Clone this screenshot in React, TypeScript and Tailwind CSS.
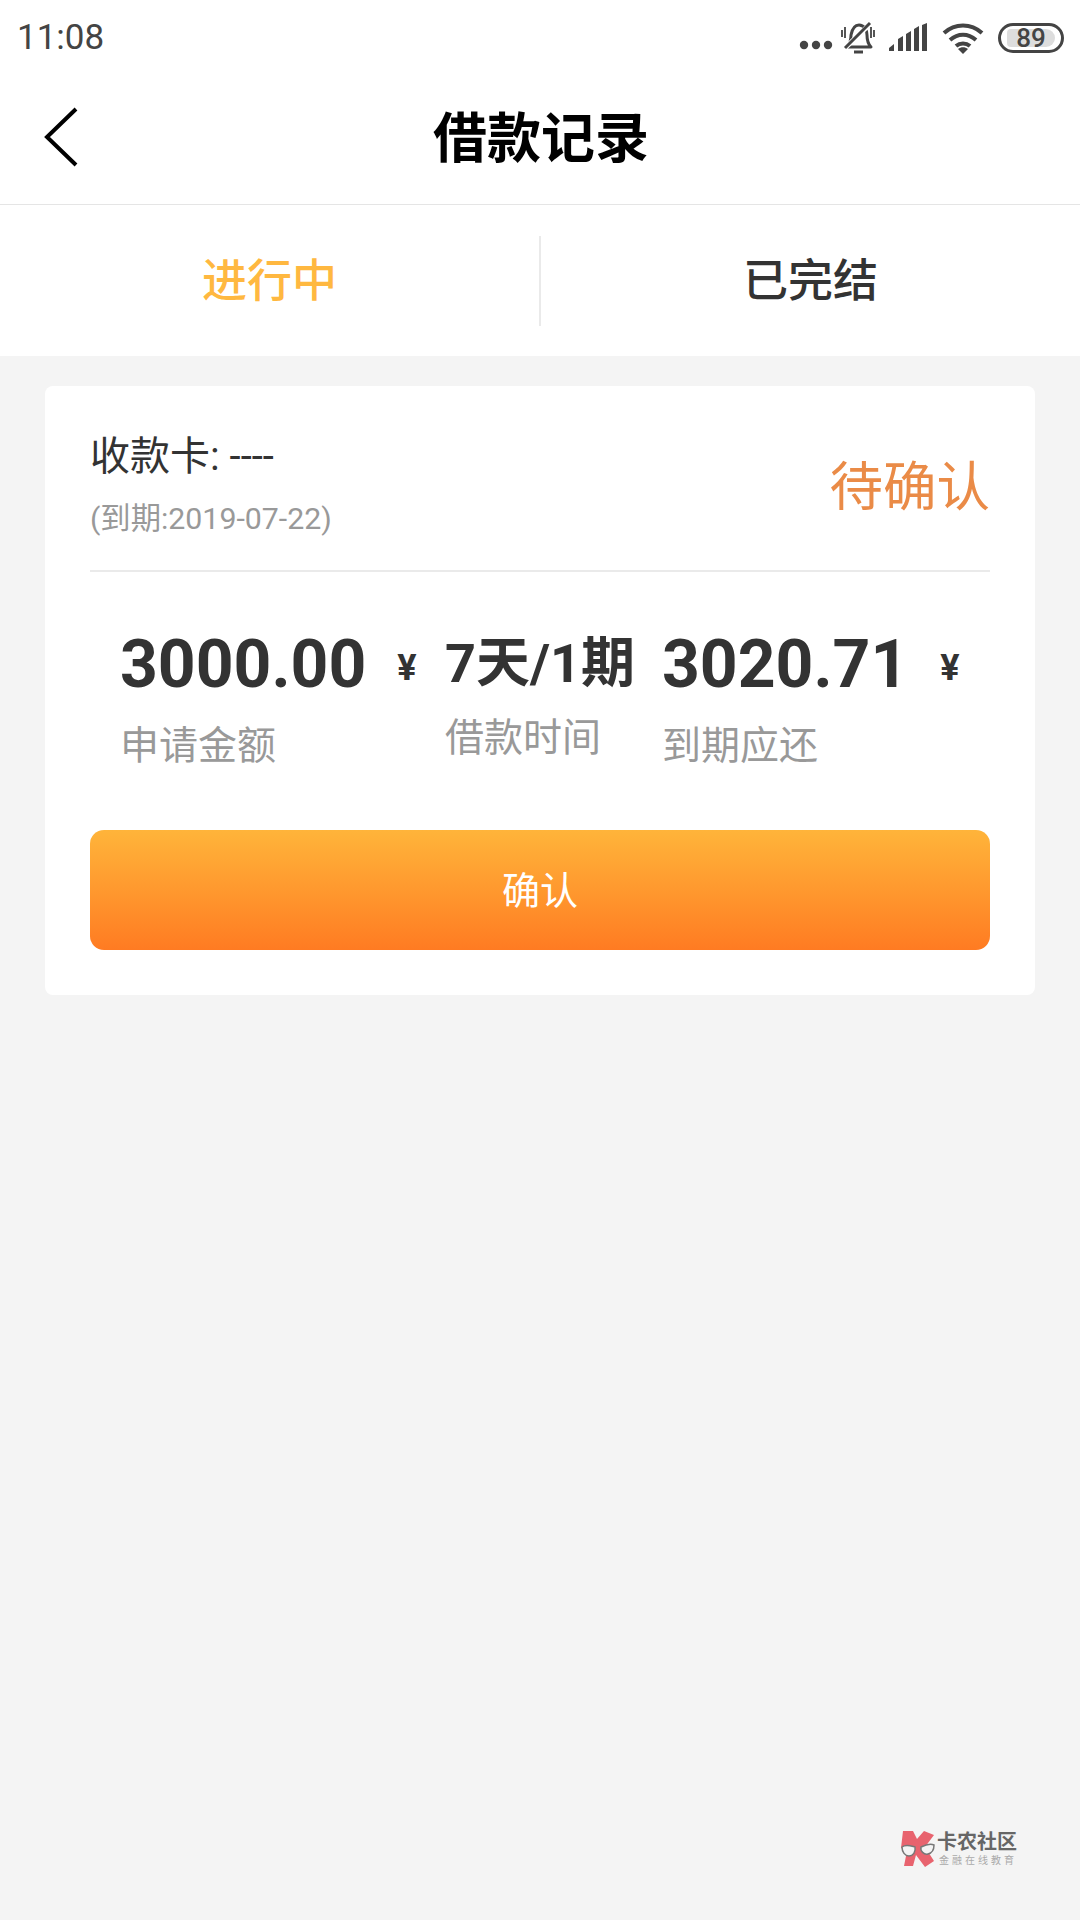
export default function App() {
  const font = { fontFamily: 'Roboto, "Noto Sans CJK SC", sans-serif' };
  return (
    <div style={font} className="w-[1080px] h-[1920px] bg-[#f4f4f4] flex flex-col relative overflow-hidden">
      <div className="h-[75px] bg-white flex items-center justify-between pl-[17px] pr-[16px]">
        <span className="text-[35px] text-[#444] leading-none">11:08</span>
        <div className="flex items-center">
          <svg width="34" height="12" viewBox="0 0 34 12" className="mt-[14px]" fill="#444">
            <circle cx="5" cy="6" r="4.200" /><circle cx="17" cy="6" r="4.200" /><circle cx="29" cy="6" r="4.200" />
          </svg>
          <svg width="34" height="34" viewBox="0 0 34 34" className="ml-[8px] mt-[1px]" fill="none" stroke="#444" strokeWidth="3">
            <path d="M6 26c3-3 4-7 4-12 1-5 3-10 8-10s8 5 8 10c0 5 1 9 4 12H6z" strokeLinejoin="round" />
            <path d="M13 31h9" strokeWidth="3" />
            <path d="M3 28 L30 2" stroke="#fff" strokeWidth="5" />
            <path d="M4 27 L29 2" />
            <path d="M1 9v7M4 6v11M30 6v11M33 9v7" strokeWidth="1.800" />
          </svg>
          <svg width="40" height="30" viewBox="0 0 40 30" className="ml-[14px]" fill="#444">
            <path d="M0 28v-3l5-4v7zM9 28V16l5-3v15zM17 28V11l5-3v20zM25 28V6l5-3v25zM33 28V2l5-2v28z" />
          </svg>
          <svg width="42" height="32" viewBox="0 0 42 32" className="ml-[13px]" fill="none" stroke="#444" strokeWidth="4">
            <path d="M2 11c11-10 27-10 38 0" /><path d="M8 18c8-7 18-7 26 0" /><path d="M14 24c4-3.500 10-3.500 14 0" />
            <path d="M21 32l-5-5c3-2.500 7-2.500 10 0z" fill="#444" stroke="none" />
          </svg>
          <div className="ml-[14px] relative w-[66px] h-[30px] rounded-full border-[3px] border-[#444] flex items-center justify-center overflow-hidden">
            <div className="absolute left-[6px] top-[3px] bottom-[3px] w-[48px] rounded-l-[4px] rounded-r-[9px] bg-[#ddd]" />
            <span className="relative text-[26px] font-medium text-[#444] leading-none">89</span>
          </div>
        </div>
      </div>
      <div className="h-[129px] bg-white flex items-center justify-center relative">
        <svg width="36" height="62" viewBox="0 0 36 62" className="absolute left-[43px] top-[31px]" fill="none" stroke="#000" strokeWidth="4">
          <path d="M33 3 L4 31 L33 59" />
        </svg>
        <span className="text-[54px] font-bold text-black leading-none ml-[2px]">借款记录</span>
      </div>
      <div className="h-[152px] bg-white border-t border-[#e5e5e5] flex items-center">
        <div className="flex-1 text-center text-[45px] font-medium text-[#ffb840] leading-none pt-[2px]">进行中</div>
        <div className="w-[2px] h-[90px] bg-[#eaeaea]" />
        <div className="flex-1 text-center text-[45px] font-medium text-[#333] leading-none pt-[2px]">已完结</div>
      </div>
      <div className="px-[45px] pt-[30px]">
        <div className="h-[609px] bg-white rounded-[8px] px-[45px]">
          <div className="h-[186px] border-b-2 border-[#eaeaea] flex items-center justify-between">
            <div>
              <div className="text-[40px] text-[#333] leading-none mt-[16px]">收款卡: ----</div>
              <div className="text-[30.300px] text-[#999] leading-none mt-[27px]">(到期:2019-07-22)</div>
            </div>
            <div className="text-[53.500px] text-[#ea8b47] leading-none mt-[20px]">待确认</div>
          </div>
          <div className="grid grid-cols-[325px_217px_1fr] pl-[30px] pt-[60px] h-[258px]">
            <div>
              <div className="flex items-center">
                <span className="text-[66px] font-bold text-[#333] leading-none">3000.00</span>
                <span className="text-[36px] font-bold text-[#333] leading-none ml-[31px] mt-[6px]">¥</span>
              </div>
              <div className="text-[39px] text-[#999] leading-none mt-[29px]">申请金额</div>
            </div>
            <div>
              <div className="text-[54px] font-bold text-[#333] leading-none mt-[5px]">7天/1期</div>
              <div className="text-[39px] text-[#999] leading-none mt-[28px]">借款时间</div>
            </div>
            <div>
              <div className="flex items-center">
                <span className="text-[66px] font-bold text-[#333] leading-none">3020.71</span>
                <span className="text-[36px] font-bold text-[#333] leading-none ml-[32px] mt-[6px]">¥</span>
              </div>
              <div className="text-[39px] text-[#999] leading-none mt-[29px]">到期应还</div>
            </div>
          </div>
          <div className="h-[120px] rounded-[14px] bg-gradient-to-b from-[#ffb43a] to-[#ff7b22] flex items-center justify-center text-[38px] text-white pt-[2px]">确认</div>
        </div>
      </div>
      <div className="absolute left-[900px] top-[1830px] flex items-center">
        <svg width="36" height="38" viewBox="0 0 36 38">
          <path d="M3 1h10l4 8 7-8 10 4-9 12 9 14-9 6-9-12-3 11H4l3-15-6-3z" fill="#e8636e" />
          <path d="M2 17c4-3 9-1 13 0 1 5-2 9-6 9-4 0-7-4-7-9z" fill="#f4f4f4" stroke="#777" strokeWidth="1.500" />
          <path d="M34 15c-4-2-9 0-13 2-1 4 3 8 7 7 4-1 6-5 6-9z" fill="#f4f4f4" stroke="#777" strokeWidth="1.500" />
        </svg>
        <div className="ml-[1px] flex flex-col">
          <span className="text-[20px] font-bold text-[#666] leading-none">卡农社区</span>
          <span className="text-[10px] text-[#aaa] leading-none mt-[4px] ml-[2px] tracking-[3px]">金融在线教育</span>
        </div>
      </div>
    </div>
  );
}
